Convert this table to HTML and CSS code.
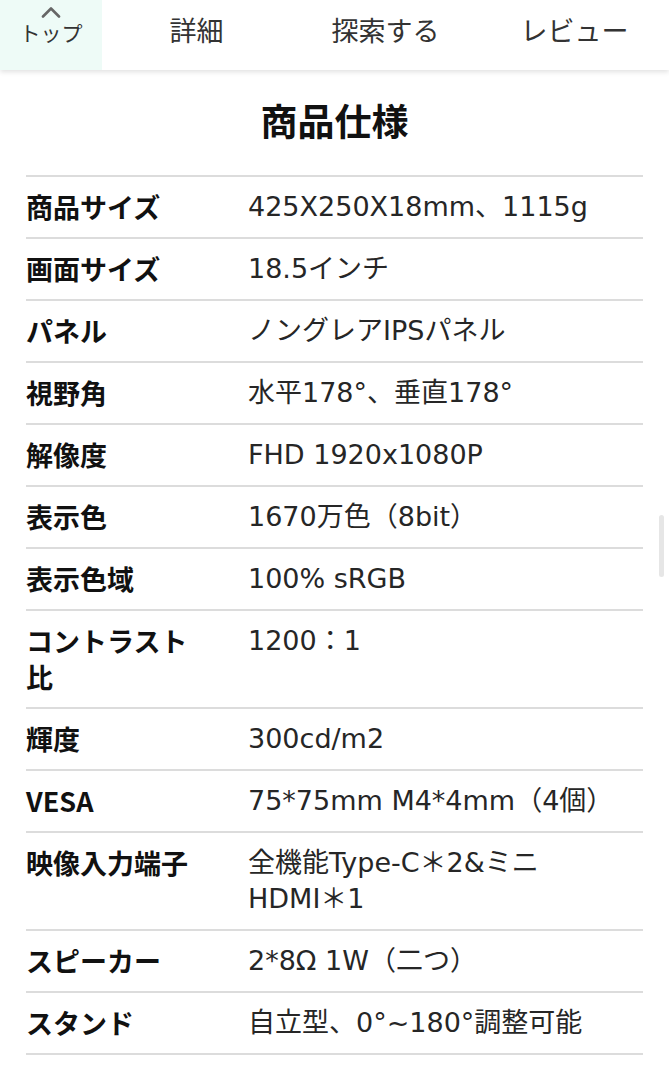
FILE: index.html
```html
<!DOCTYPE html>
<html lang="ja">
<head>
<meta charset="utf-8">
<link rel="stylesheet" href="styles.css">
</head>
<body>
<nav class="tabs">
  <a class="tab tab-top">
    <svg class="caret" width="22" height="12" viewBox="0 0 22 12"><path d="M3 10.5 L11 2.5 L19 10.5" fill="none" stroke="#666" stroke-width="2.6" stroke-linecap="round" stroke-linejoin="round"/></svg>
    <span>トップ</span>
  </a>
  <a class="tab">詳細</a>
  <a class="tab">探索する</a>
  <a class="tab">レビュー</a>
</nav>
<main class="content">
  <h2 class="title">商品仕様</h2>
  <table class="spec">
    <tr><th>商品サイズ</th><td>425X250X18mm、1115g</td></tr>
    <tr><th>画面サイズ</th><td>18.5インチ</td></tr>
    <tr><th>パネル</th><td>ノングレアIPSパネル</td></tr>
    <tr><th>視野角</th><td>水平178°、垂直178°</td></tr>
    <tr><th>解像度</th><td>FHD 1920x1080P</td></tr>
    <tr><th>表示色</th><td>1670万色（8bit）</td></tr>
    <tr><th>表示色域</th><td>100% sRGB</td></tr>
    <tr><th>コントラスト比</th><td>1200：1</td></tr>
    <tr><th>輝度</th><td>300cd/m2</td></tr>
    <tr><th>VESA</th><td>75*75mm M4*4mm（4個）</td></tr>
    <tr><th>映像入力端子</th><td>全機能Type-C＊2&amp;ミニ<span class="nowrap">HDMI＊1</span></td></tr>
    <tr><th>スピーカー</th><td>2*8Ω 1W（二つ）</td></tr>
    <tr><th>スタンド</th><td>自立型、0°~180°調整可能</td></tr>
  </table>
</main>
<div class="scroll-indicator"></div>
</body>
</html>
```

FILE: styles.css
```css
* { box-sizing: border-box; }
html, body { margin: 0; padding: 0; background: #fff; }
body {
  font-family: "DejaVu Sans", "Noto Sans CJK JP", sans-serif;
  color: #1a1a1a;
  width: 669px;
  overflow: hidden;
}
.tabs {
  display: flex;
  height: 70px;
  background: #fff;
  box-shadow: 0 2px 5px rgba(0,0,0,0.12);
  position: relative;
  z-index: 2;
}
.tab {
  flex: 1;
  display: flex;
  align-items: center;
  justify-content: center;
  font-size: 27px;
  color: #333;
  font-family: "Noto Sans CJK JP", sans-serif;
  padding-bottom: 12px;
}
.tab-top {
  flex: 0 0 102px;
  flex-direction: column;
  justify-content: flex-start;
  background: #eefbf7;
  font-size: 21px;
  padding-top: 6px;
  padding-bottom: 0;
}
.tab-top span { line-height: 26px; margin-top: 1px; color: #333; }
.caret { display: block; }
.content { padding: 0 26px; }
.title {
  margin: 25px 0 30px;
  text-align: center;
  font-size: 37px;
  line-height: 50px;
  font-weight: bold;
  font-family: "Noto Sans CJK JP", sans-serif;
  color: #111;
}
.spec {
  width: 100%;
  border-collapse: collapse;
  border-top: 2px solid #dcdcdc;
}
.spec tr { border-bottom: 2px solid #dcdcdc; }
.spec th, .spec td {
  padding: 12px 0;
  line-height: 36px;
  font-size: 27px;
  vertical-align: top;
  text-align: left;
}
.spec th {
  width: 222px;
  padding-right: 47px;
  font-weight: bold;
  font-family: "Noto Sans CJK JP", sans-serif;
  color: #111;
}
.spec td {
  font-weight: normal;
  color: #262626;
}
.nowrap { white-space: nowrap; }
.scroll-indicator {
  position: fixed;
  right: 5px;
  top: 515px;
  width: 5px;
  height: 62px;
  border-radius: 3px;
  background: #e6e6e6;
}
```
